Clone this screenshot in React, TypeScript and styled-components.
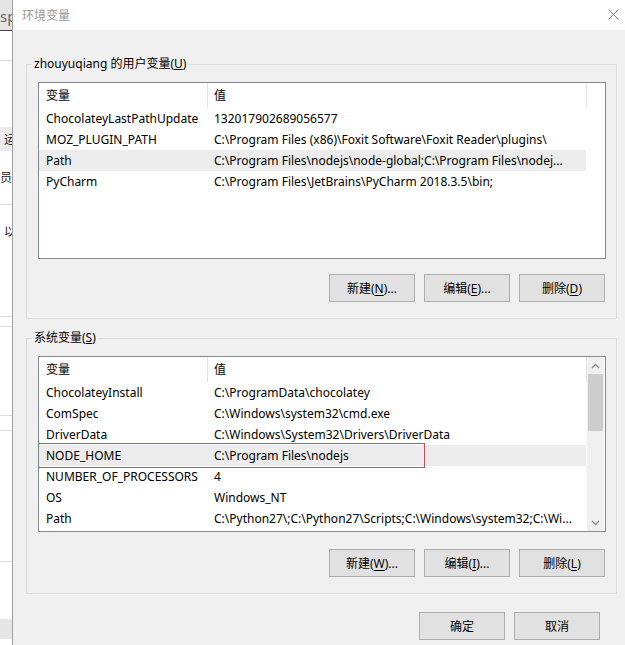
import React from 'react';
import styled, { createGlobalStyle } from 'styled-components';

const Global = createGlobalStyle`
  html, body { margin: 0; padding: 0; background: #fff; overflow: hidden; }
  body {
    font-family: "Noto Sans", "Noto Sans CJK SC", sans-serif;
    font-size: 12px;
    color: #000;
  }
  * { box-sizing: border-box; }
`;

const Screen = styled.div`
  display: flex;
  width: 625px;
  height: 645px;
  overflow: hidden;
`;

/* ---------- window behind the dialog ---------- */
const BackWindow = styled.div`
  width: 12px;
  flex: none;
  display: flex;
  flex-direction: column;
  background: #fff;
  overflow: hidden;
`;

const BackPiece = styled.div<{ $h: number; $bg?: string; $line?: string; $shift?: number }>`
  height: ${p => p.$h}px;
  flex: none;
  background: ${p => p.$bg || '#fff'};
  border-bottom: ${p => (p.$line ? `1px solid ${p.$line}` : 'none')};
  display: flex;
  align-items: center;
  padding-left: ${p => p.$shift ?? 0}px;
  white-space: nowrap;
  color: #222;
  font-size: 12px;
  overflow: hidden;
`;

const BackTab = styled(BackPiece)`
  font-size: 15px;
  color: #666;
  align-items: flex-end;
  padding-bottom: 4px;
`;

/* ---------- dialog ---------- */
const Dialog = styled.div`
  flex: 1;
  min-width: 0;
  display: flex;
  flex-direction: column;
  border-left: 1px solid #a0a0a0;
  background: #f0f0f0;
`;

const TitleBar = styled.div`
  height: 30px;
  flex: none;
  background: #fff;
  display: flex;
  align-items: center;
  justify-content: space-between;
  padding: 0 6px 1px 9px;
  color: #9a9a9a;
  font-size: 12px;
`;

const Body = styled.div`
  display: flex;
  flex-direction: column;
  padding: 26px 8px 0 13px;
`;

const Group = styled.fieldset<{ $gapTop?: number }>`
  margin: ${p => p.$gapTop ?? 0}px 0 0 0;
  padding: 10px 10px 16px 11px;
  border: 1px solid #dcdcdc;
  width: 591px;
  min-width: 0;
`;

const Legend = styled.legend`
  padding: 0 2px;
  margin-left: -6px;
  line-height: 16px;
  font-size: 12px;
`;

const List = styled.div<{ $h: number }>`
  height: ${p => p.$h}px;
  width: 568px;
  border: 1px solid #828790;
  background: #fff;
  display: flex;
  overflow: hidden;
`;

const Table = styled.div`
  width: 548px;
  flex: none;
  display: flex;
  flex-direction: column;
`;

const HeaderRow = styled.div`
  height: 25px;
  flex: none;
  display: flex;
`;

const HeaderCell = styled.div<{ $w: number; $pad: number }>`
  width: ${p => p.$w}px;
  flex: none;
  padding-left: ${p => p.$pad}px;
  border-right: 1px solid #e5e5e5;
  line-height: 25px;
`;

const Row = styled.div<{ $selected?: boolean }>`
  position: relative;
  height: 21px;
  width: 547px;
  flex: none;
  display: flex;
  background: ${p => (p.$selected ? '#ececec' : 'transparent')};
  line-height: 21px;
  white-space: nowrap;
`;

const NameCell = styled.div`
  width: 169px;
  flex: none;
  padding-left: 7px;
  overflow: hidden;
`;

const ValueCell = styled.div`
  flex: 1;
  min-width: 0;
  padding-left: 6px;
  overflow: hidden;
`;

const Highlight = styled.div`
  position: absolute;
  left: -3px;
  top: -2px;
  width: 389px;
  height: 25px;
  border: 1px solid #d04a58;
  pointer-events: none;
`;

const Scrollbar = styled.div`
  width: 17px;
  flex: none;
  background: #f0f0f0;
  display: flex;
  flex-direction: column;
`;

const ArrowBox = styled.div`
  height: 17px;
  flex: none;
  display: flex;
  align-items: center;
  justify-content: center;
`;

const Track = styled.div`
  flex: 1;
  display: flex;
  flex-direction: column;
  padding: 0 1px;
`;

const Thumb = styled.div`
  height: 57px;
  background: #cdcdcd;
`;

const ButtonRow = styled.div<{ $gap?: number }>`
  display: flex;
  justify-content: flex-end;
  gap: 9px;
  margin-top: ${p => p.$gap ?? 16}px;
  padding-right: 1px;
`;

const Button = styled.button`
  width: 86px;
  height: 28px;
  padding: 0;
  background: #e1e1e1;
  border: 1px solid #adadad;
  font-family: inherit;
  font-size: 12px;
  color: #000;
  display: flex;
  align-items: center;
  justify-content: center;
  u { text-decoration-thickness: 1px; text-underline-offset: 2px; }
`;

const Footer = styled.div`
  display: flex;
  justify-content: flex-end;
  gap: 9px;
  margin-top: 18px;
  padding-right: 17px;
`;

type Entry = { name: string; value: string; selected?: boolean; marked?: boolean };

const userVars: Entry[] = [
  { name: 'ChocolateyLastPathUpdate', value: '132017902689056577' },
  { name: 'MOZ_PLUGIN_PATH', value: 'C:\\Program Files (x86)\\Foxit Software\\Foxit Reader\\plugins\\' },
  { name: 'Path', value: 'C:\\Program Files\\nodejs\\node-global;C:\\Program Files\\nodej...', selected: true },
  { name: 'PyCharm', value: 'C:\\Program Files\\JetBrains\\PyCharm 2018.3.5\\bin;' },
];

const sysVars: Entry[] = [
  { name: 'ChocolateyInstall', value: 'C:\\ProgramData\\chocolatey' },
  { name: 'ComSpec', value: 'C:\\Windows\\system32\\cmd.exe' },
  { name: 'DriverData', value: 'C:\\Windows\\System32\\Drivers\\DriverData' },
  { name: 'NODE_HOME', value: 'C:\\Program Files\\nodejs', selected: true, marked: true },
  { name: 'NUMBER_OF_PROCESSORS', value: '4' },
  { name: 'OS', value: 'Windows_NT' },
  { name: 'Path', value: 'C:\\Python27\\;C:\\Python27\\Scripts;C:\\Windows\\system32;C:\\Wi...' },
];

const Chevron = ({ up }: { up?: boolean }) => (
  <svg width="9" height="6" viewBox="0 0 9 6">
    <polyline
      points={up ? '1,5 4.5,1.5 8,5' : '1,1 4.5,4.5 8,1'}
      fill="none"
      stroke="#8a8a8a"
      strokeWidth="1.3"
    />
  </svg>
);

const CloseIcon = () => (
  <svg width="11" height="11" viewBox="0 0 11 11">
    <path d="M0.5 0.5 L10.5 10.5 M10.5 0.5 L0.5 10.5" stroke="#7a7a7a" strokeWidth="1" fill="none" />
  </svg>
);

const VarTable = ({ rows }: { rows: Entry[] }) => (
  <Table>
    <HeaderRow>
      <HeaderCell $w={169} $pad={7}>变量</HeaderCell>
      <HeaderCell $w={379} $pad={6}>值</HeaderCell>
    </HeaderRow>
    {rows.map(r => (
      <Row key={r.name} $selected={r.selected}>
        <NameCell>{r.name}</NameCell>
        <ValueCell>{r.value}</ValueCell>
        {r.marked && <Highlight />}
      </Row>
    ))}
  </Table>
);

export default function App() {
  return (
    <>
      <Global />
      <Screen>
        <BackWindow>
          <BackTab $h={31} $bg="#e6e6e6" $line="#444" $shift={0}>sp</BackTab>
          <BackPiece $h={30} $line="#d8d8d8" />
          <BackPiece $h={66} />
          <BackPiece $h={24} $bg="#ebebeb" $shift={4}>运</BackPiece>
          <BackPiece $h={14} />
          <BackPiece $h={24} $shift={0}>员</BackPiece>
          <BackPiece $h={16} $line="#dcdcdc" />
          <BackPiece $h={14} />
          <BackPiece $h={24} $shift={4}>以</BackPiece>
          <BackPiece $h={74} $line="#e0e0e0" />
          <BackPiece $h={10} $line="#e0e0e0" />
          <BackPiece $h={89} $line="#e0e0e0" />
          <BackPiece $h={15} $line="#e0e0e0" />
          <BackPiece $h={131} $line="#e0e0e0" />
          <BackPiece $h={57} />
          <BackPiece $h={20} $bg="#e6e6e6" />
        </BackWindow>
        <Dialog>
          <TitleBar>
            <span>环境变量</span>
            <CloseIcon />
          </TitleBar>
          <Body>
            <Group>
              <Legend>zhouyuqiang 的用户变量(<u>U</u>)</Legend>
              <List $h={177}>
                <VarTable rows={userVars} />
              </List>
              <ButtonRow $gap={15}>
                <Button>新建(<u>N</u>)...</Button>
                <Button>编辑(<u>E</u>)...</Button>
                <Button>删除(<u>D</u>)</Button>
              </ButtonRow>
            </Group>
            <Group $gapTop={11}>
              <Legend>系统变量(<u>S</u>)</Legend>
              <List $h={176}>
                <VarTable rows={sysVars} />
                <Scrollbar>
                  <ArrowBox><Chevron up /></ArrowBox>
                  <Track><Thumb /></Track>
                  <ArrowBox><Chevron /></ArrowBox>
                </Scrollbar>
              </List>
              <ButtonRow $gap={17}>
                <Button>新建(<u>W</u>)...</Button>
                <Button>编辑(<u>I</u>)...</Button>
                <Button>删除(<u>L</u>)</Button>
              </ButtonRow>
            </Group>
            <Footer>
              <Button>确定</Button>
              <Button>取消</Button>
            </Footer>
          </Body>
        </Dialog>
      </Screen>
    </>
  );
}
